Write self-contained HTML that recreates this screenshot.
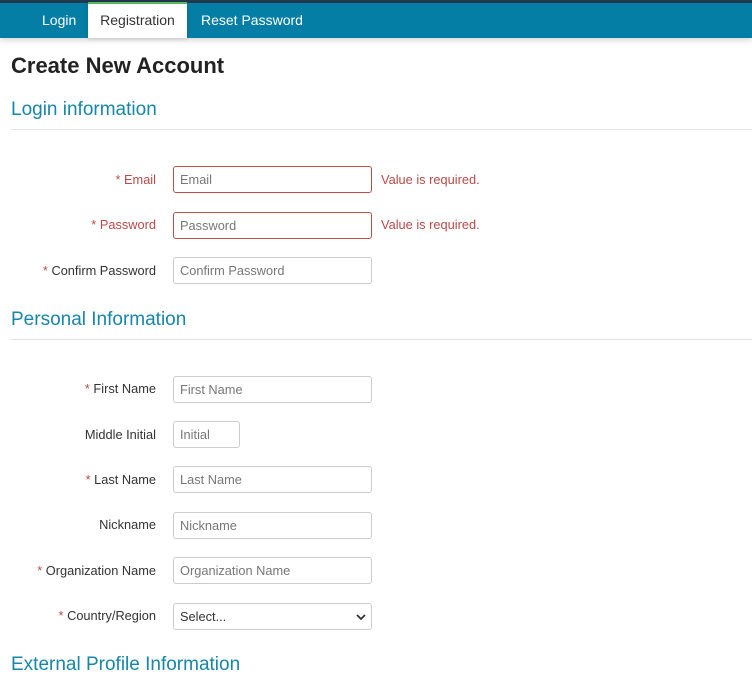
<!DOCTYPE html>
<html><head><meta charset="utf-8"><style>
*{box-sizing:border-box;margin:0;padding:0}
body{width:752px;height:677px;overflow:hidden;background:#fff;font-family:"Liberation Sans",Arial,sans-serif;position:relative;color:#333}
.top{position:absolute;left:0;top:0;width:752px;height:3px;background:#233a52}
.nav{position:absolute;left:0;top:3px;width:752px;height:35px;background:#047ea5;box-shadow:0 2px 6px rgba(0,0,0,.18)}
.tab{position:absolute;top:0;height:35px;line-height:34px;font-size:14px;color:#fff}
.tab.act{background:#fff;color:#333;border-top:2px solid #5cb85c;line-height:33px;top:-1px;height:36px;text-align:center;box-shadow:0 0 5px rgba(0,0,0,.15)}
h1{position:absolute;left:11px;top:53px;font-size:22px;font-weight:bold;color:#222}
h2{position:absolute;left:11px;font-size:19px;font-weight:normal;color:#1786a8}
.hr{position:absolute;left:11px;width:741px;height:1px;background:#e2e2e2}
.lab{position:absolute;right:596px;font-size:12.8px;color:#333;white-space:nowrap}
.lab .s{color:#b94a48}
.lab.err{color:#b94a48}
.inp{position:absolute;left:173px;width:199px;height:27px;border:1px solid #ccc;border-radius:3px;font-size:12.8px;color:#777;padding-left:6px;line-height:25px}
.inp.e{border-color:#c24a48}
.msg{position:absolute;left:381px;font-size:12.8px;color:#b94a48}
</style></head><body>
<div class="top"></div>
<div class="nav">
<div class="tab" style="left:42px">Login</div>
<div class="tab act" style="left:88px;width:99px">Registration</div>
<div class="tab" style="left:201px">Reset Password</div>
</div>
<h1>Create New Account</h1>
<h2 style="top:99px">Login information</h2>
<div class="hr" style="top:129px"></div>

<div class="lab err" style="top:172px"><span class="s">* </span>Email</div>
<div class="inp e" style="top:166px">Email</div>
<div class="msg" style="top:172px">Value is required.</div>

<div class="lab err" style="top:217px"><span class="s">* </span>Password</div>
<div class="inp e" style="top:212px">Password</div>
<div class="msg" style="top:217px">Value is required.</div>

<div class="lab" style="top:263px"><span class="s">* </span>Confirm Password</div>
<div class="inp" style="top:257px">Confirm Password</div>

<h2 style="top:309px">Personal Information</h2>
<div class="hr" style="top:339px"></div>

<div class="lab" style="top:381px"><span class="s">* </span>First Name</div>
<div class="inp" style="top:376px">First Name</div>

<div class="lab" style="top:427px">Middle Initial</div>
<div class="inp" style="top:421px;width:67px">Initial</div>

<div class="lab" style="top:472px"><span class="s">* </span>Last Name</div>
<div class="inp" style="top:466px">Last Name</div>

<div class="lab" style="top:517px">Nickname</div>
<div class="inp" style="top:512px">Nickname</div>

<div class="lab" style="top:563px"><span class="s">* </span>Organization Name</div>
<div class="inp" style="top:557px">Organization Name</div>

<div class="lab" style="top:608px"><span class="s">* </span>Country/Region</div>
<div class="inp" style="top:603px;color:#333">Select...
<svg style="position:absolute;right:5px;top:9px" width="10" height="8" viewBox="0 0 10 8"><path d="M1 2 L5 6 L9 2" fill="none" stroke="#333" stroke-width="1.8"/></svg></div>

<h2 style="top:654px">External Profile Information</h2>
</body></html>
